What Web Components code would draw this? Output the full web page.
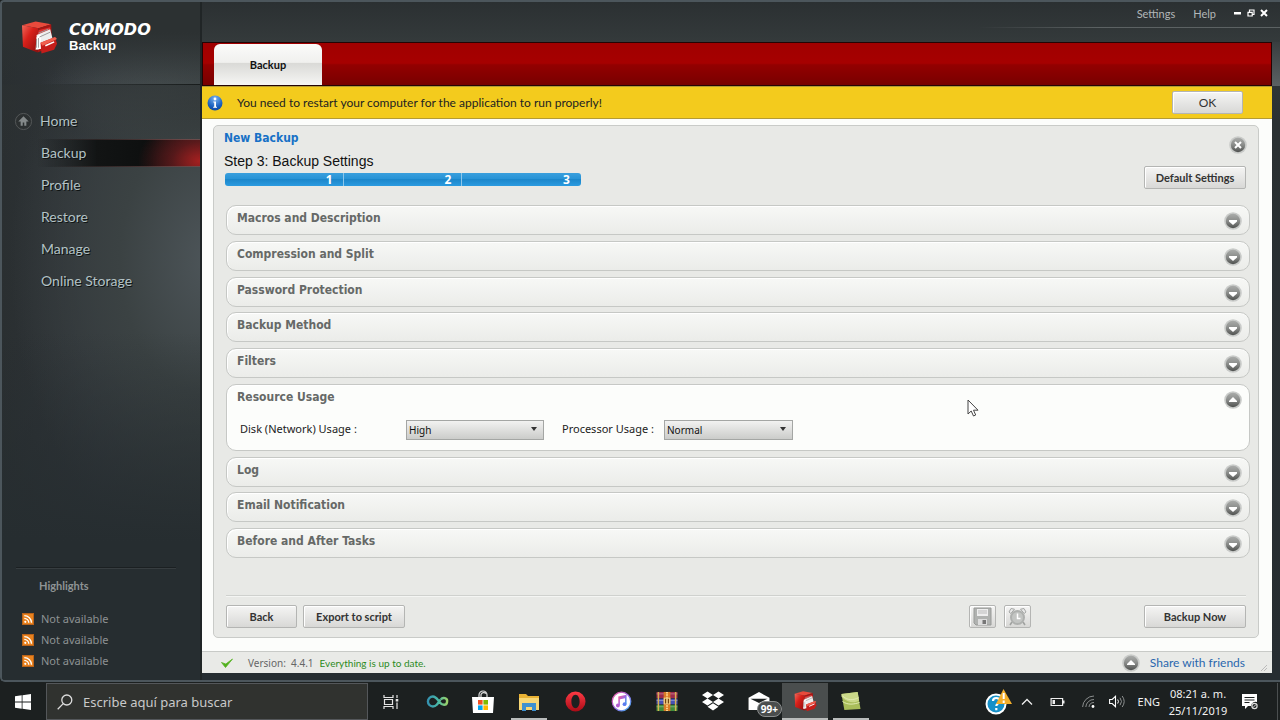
<!DOCTYPE html>
<html lang="en">
<head>
<meta charset="utf-8">
<title>COMODO Backup</title>
<style>
html, body { margin: 0; height: 100%; }
body { background: #1b2020; font-family: Lato, "Noto Sans", sans-serif; }
</style>
</head>
<body>
<backup-desktop></backup-desktop>

<script>
const define = (name, render, after) => {
  customElements.define(name, class extends HTMLElement {
    constructor() {
      super();
      this.attachShadow({ mode: 'open' });
    }
    connectedCallback() {
      if (this.shadowRoot.childNodes.length) return;
      const t = document.createElement('template');
      t.innerHTML = render(this);
      this.shadowRoot.append(t.content.cloneNode(true));
      if (after) after(this);
    }
  });
};

const ICONS = {
  cabinet: `<svg viewBox="0 0 38 34"><defs><linearGradient id="a" x1="0" y1="0" x2="1" y2="1"><stop offset="0" stop-color="#f2685a"/><stop offset=".4" stop-color="#d8201a"/><stop offset="1" stop-color="#8a0d0c"/></linearGradient></defs>
    <path d="M1 4 15 0 31 3 18 7Z" fill="#e84a3c"/><path d="M1 4 18 7 17 32 2 26Z" fill="url(#a)"/><path d="M18 7 31 3 32 26 17 32Z" fill="#a81512"/>
    <path d="M18 9 30 6V11L17 16Z" fill="#d33"/><path d="M16 14 30 8 33 20 17 29Z" fill="#eee"/><path d="M16 16 20 13 21 28 15 29Z" fill="#fff"/><path d="M18 12 28 8M19 16 30 11" stroke="#999" stroke-width="1"/>
    <path d="M20 22 35 16 37 23 34 29 21 33Z" fill="#c41d1a"/><path d="M20 22 35 16 37 18 22 25Z" fill="#f0604f"/><path d="m25 25 9-4" stroke="#fff" stroke-width="1.6"/><path d="M16 18v9M18 17v10" stroke="#777" stroke-width=".7"/></svg>`,
  home: `<svg viewBox="0 0 20 20"><circle cx="10" cy="10" r="8.5" fill="#2c3031" stroke="#55595a"/><path d="M10 4.5 4.500 10H7v4.500h2.200V11h1.600v3.500H13V10h2.500Z" fill="#84898a"/></svg>`,
  info: `<svg viewBox="0 0 16 16"><defs><radialGradient id="a" cx=".5" cy=".2" r=".9"><stop offset="0" stop-color="#7db4ee"/><stop offset=".6" stop-color="#1b62c0"/><stop offset="1" stop-color="#0c3f93"/></radialGradient></defs><circle cx="8" cy="8" r="7.500" fill="url(#a)"/><circle cx="8" cy="4" r="1.400" fill="#fff"/><path d="M6.300 6.500h2.700v5.200h1v1H6.200v-1h1V7.500h-.9Z" fill="#fff"/></svg>`,
  rss: `<svg viewBox="0 0 12 12"><rect width="12" height="12" rx="1" fill="#e8821e"/><rect x=".5" y=".5" width="11" height="11" fill="none" stroke="#b9631a"/><circle cx="3.300" cy="8.800" r="1.100" fill="#fff"/><path d="M2.300 5.300a4.500 4.500 0 0 1 4.500 4.500M2.300 2.600a7.200 7.200 0 0 1 7.200 7.200" fill="none" stroke="#fff" stroke-width="1.300"/></svg>`,
  check: `<svg viewBox="0 0 12 10"><path d="M.5 4.500 4.500 9.500 11.500 1 4.800 6Z" fill="#4faf1c" stroke="#58b424" stroke-width=".8"/></svg>`,
  floppy: `<svg viewBox="0 0 19 19"><path d="M1 1h17v17H3L1 16Z" fill="#b0b2b0" stroke="#989a98"/><path d="M4 2h11v7H4Z" fill="#eee"/><path d="M5 4h9M5 6h9" stroke="#bbb"/><path d="M5 12h9v6H5Z" fill="#ddd"/><path d="M9.500 13h3.500v4H9.500Z" fill="#777"/></svg>`,
  alarm: `<svg viewBox="0 0 19 19"><path d="m4 15-2 3M15 15l2 3" stroke="#a0a2a0" stroke-width="1.600"/><circle cx="9.500" cy="10.500" r="6.500" fill="#c3c5c3" stroke="#aeb0ae" stroke-width="2"/><path d="M1 5 3 1.500 6.500 2.200 2.800 6.500ZM18 5 16 1.500 12.500 2.200 16.200 6.500Z" fill="#e7e7e7" stroke="#a6a8a6"/><path d="M9.500 6.500v5h3" fill="none" stroke="#fff" stroke-width="1.500"/></svg>`,
  min: `<svg viewBox="0 0 8 8"><path d="M0 3h7v2.500H0Z" fill="#fff"/></svg>`,
  restore: `<svg viewBox="0 0 8 8"><path d="M2.500 3V1h4.500v4.500H5.500M1 3.300h4.200v3.700H1Z" fill="none" stroke="#fff" stroke-width="1.200"/></svg>`,
  close: `<svg viewBox="0 0 8 8"><path d="m1 1 6 6M7 1 1 7" stroke="#fff" stroke-width="2"/></svg>`,
  pointer: `<svg viewBox="0 0 12 18"><path d="M1 1v14l3.200-3 2.300 5 2.200-1-2.200-4.800H11Z" fill="#fff" stroke="#444" stroke-width="1"/></svg>`,
  grip: `<svg viewBox="0 0 6 6"><path d="M0 6 6 0M3 6l3-3" stroke="#bbb" fill="none"/></svg>`,
  windows: `<svg viewBox="0 0 16 16"><path d="M0 2.300 6.700 1.300V7.600H0ZM7.500 1.200 16 0V7.600H7.500ZM0 8.400H6.700V14.700L0 13.700ZM7.500 8.400H16V16L7.500 14.800Z" fill="#fff"/></svg>`,
  search: `<svg viewBox="0 0 16 16"><circle cx="9.800" cy="6" r="5" fill="none" stroke="#ddd" stroke-width="1.300"/><path d="M6.200 9.600.7 15.300" stroke="#ddd" stroke-width="1.300"/></svg>`,
  taskview: `<svg viewBox="0 0 16 14"><path d="M1 0v2.500h9V0M1 14v-2.500h9V14M1.500 4.500h8v5h-8Z" fill="none" stroke="#e5e5e5" stroke-width="1.200"/><path d="M14 0v3M14 7.500V14" stroke="#e5e5e5" stroke-width="1.200"/><path d="M12.700 4h2.600v2.500h-2.600Z" fill="#e5e5e5"/></svg>`,
  infinity: `<svg viewBox="0 0 24 14"><defs><linearGradient id="a"><stop offset="0" stop-color="#3492b0"/><stop offset=".55" stop-color="#4ab9a5"/><stop offset="1" stop-color="#9ad169"/></linearGradient></defs><path d="M15 5C12 10 10.500 12.300 7 12.300A5.300 5.300 0 1 1 7 1.700C10.500 1.700 12 5 14.500 8S21.500 12 22.300 7.500 17.500 2 15.500 5" fill="none" stroke="url(#a)" stroke-width="2.600"/></svg>`,
  store: `<svg viewBox="0 0 22 22"><path d="M7 7V4a4 4 0 0 1 8 0V7M9 7V3.500a3 3 0 0 1 5-1" fill="none" stroke="#ddd" stroke-width="1.200"/><path d="M0 6h22l-1 16H1Z" fill="#fff"/><path d="M6 9h4.600v4.600H6Z" fill="#f25022"/><path d="M11.400 9H16v4.600h-4.600Z" fill="#7fba00"/><path d="M6 14.400h4.600V19H6Z" fill="#00a4ef"/><path d="M11.400 14.400H16V19h-4.600Z" fill="#ffb900"/></svg>`,
  folder: `<svg viewBox="0 0 20 18"><path d="M0 1h7l2 2h11v14H0Z" fill="#e9b234"/><path d="M0 5h20v12H0Z" fill="#f8d775"/><path d="M3 10h14v8h-4v-4H7v4H3Z" fill="#3f91cf"/></svg>`,
  opera: `<svg viewBox="0 0 22 22"><defs><linearGradient id="a" x2="0" y2="1"><stop offset="0" stop-color="#ff3b45"/><stop offset="1" stop-color="#a80b16"/></linearGradient></defs><path fill-rule="evenodd" d="M11 .5a10.500 10.500 0 1 0 0 21 10.500 10.500 0 0 0 0-21ZM11 4c2.500 0 4.300 3 4.300 7s-1.800 7-4.300 7-4.300-3-4.300-7S8.500 4 11 4Z" fill="url(#a)"/></svg>`,
  music: `<svg viewBox="0 0 22 22"><defs><linearGradient id="a" x2="1" y2="1"><stop offset="0" stop-color="#f0569a"/><stop offset=".5" stop-color="#9a68e2"/><stop offset="1" stop-color="#35b5f0"/></linearGradient></defs><circle cx="11" cy="11" r="9.700" fill="#fff" stroke="url(#a)" stroke-width="1.300"/><path d="M8.500 15V6.500l7-1.500v8.500M8.500 8l7-1.500" fill="none" stroke="url(#a)" stroke-width="1.700"/><circle cx="7.200" cy="15.200" r="2" fill="#b25bd0"/><circle cx="14.200" cy="13.800" r="2" fill="#5a7cf0"/></svg>`,
  winrar: `<svg viewBox="0 0 24 22"><path d="M1 1h22v6.500H1Z" fill="#9c2b4c"/><path d="M1 8h22v6H1Z" fill="#4451b5"/><path d="M1 14.500h22V21H1Z" fill="#3e8b3c"/><path d="M1 3h22M1 10h22M1 16.500h22" stroke="#ffffff55"/><path d="M3 1v20M21 1v20" stroke="#d7b052" stroke-width="1.500"/><path d="M8.500 1h7v20h-7Z" fill="#d97b25"/><path d="M8.500 7h7v7h-7Z" fill="#f3cf84"/><path d="M10.500 8v5M13.500 8v5" stroke="#73430f" stroke-width="1.300"/><path d="M12 1v6M12 15v6" stroke="#ffd48c" stroke-width="2" stroke-dasharray="1.500 1"/></svg>`,
  dropbox: `<svg viewBox="0 0 22 20"><path d="M5.500 0 11 3.500 5.500 7 0 3.500ZM16.500 0 22 3.500 16.500 7 11 3.500ZM5.500 7 11 10.500 5.500 14 0 10.500ZM16.500 7 22 10.500 16.500 14 11 10.500ZM5.500 15.200 11 11.700l5.500 3.500L11 19Z" fill="#fff"/></svg>`,
  mail: `<svg viewBox="0 0 24 20"><path d="M1 6 12 0 23 6V19H1Z" fill="#fff"/><path d="M3 7h18l-9 4.500Z" fill="#1c2020"/></svg>`,
  green: `<svg viewBox="0 0 20 20"><path d="M0 2 17 0 20 18 3 19Z" fill="#a9bd5a"/><path d="M0 5C7 12 14 12 18.500 9L17 0 0 2Z" fill="#cbd98a"/><path d="M1 10c6 4 12 3 18 1M1 4c5 5 11 5 17 2" stroke="#e3ecb4" fill="none"/></svg>`,
  helpwarn: `<svg viewBox="0 0 27 27"><circle cx="11" cy="16" r="9.500" fill="#1690c8" stroke="#fff" stroke-width="2"/><path d="M8 13c0-4 6.500-4 6.500 0 0 2.500-3.200 2.300-3.200 5M11.300 20v2.300" fill="none" stroke="#fff" stroke-width="2.200"/><path d="M18.500 1 27 16H11Z" fill="#f2ae2b"/><path d="M18.700 5v6M18.700 12.500V15" stroke="#fff" stroke-width="2"/></svg>`,
  chevron: `<svg viewBox="0 0 12 7"><path d="m1 6.500 5-5 5 5" fill="none" stroke="#eee" stroke-width="1.300"/></svg>`,
  battery: `<svg viewBox="0 0 14 10"><path d="M.6 1.500h11.500v7H.6Z" fill="none" stroke="#eee" stroke-width="1.200"/><path d="M12.500 3.500h1.500v3h-1.500ZM2 3h2.500v4H2Z" fill="#eee"/></svg>`,
  wifi: `<svg viewBox="0 0 13 13"><path d="M.6 12A11.500 11.500 0 0 1 12 1M3.800 12A8 8 0 0 1 12 4.500M7 12a5 5 0 0 1 5-4.500" fill="none" stroke="#8a8d8d"/><circle cx="11" cy="11.500" r="1.400" fill="#fff"/></svg>`,
  volume: `<svg viewBox="0 0 16 13"><path d="M.6 4.500h2.600L6.500 1.300v10.400L3.200 8.500H.6Z" fill="none" stroke="#fff" stroke-width="1.100"/><path d="M8.700 4.500q1.500 2 0 4" fill="none" stroke="#fff"/><path d="M11 2.800q3 3.700 0 7.400M13.200 1q4 5.500 0 11" fill="none" stroke="#8d9090"/></svg>`,
  notes: `<svg viewBox="0 0 16 16"><path d="M0 0h15v8a4.500 4.500 0 0 0-6 4H6l-3 3v-3H0Z" fill="#fff"/><path d="M2.500 3.500h10M2.500 6h10M2.500 8.500h5" stroke="#1c2020"/><circle cx="12.500" cy="12" r="2.600" fill="none" stroke="#ddd" stroke-width="1.200"/><path d="m11 13.500 3-3" stroke="#ddd"/></svg>`
};

/* Sized by the --w and --h properties of its user. */
define('ui-icon', el => `<style>
  :host { display: block; flex: none; width: var(--w, 16px); height: var(--h, var(--w, 16px)); }
  svg { display: block; width: 100%; height: 100%; overflow: visible; }
  </style>${ICONS[el.getAttribute('name')]}`);

define('round-button', el => {
  const marks = {
    down: '<path d="M5 8h8v1.500L9 13 5 9.500Z" fill="#fff"/>',
    up: '<path d="M5 10 9 6l4 4v1H5Z" fill="#fff"/>',
    close: '<path d="m6 6 6 6M12 6l-6 6" stroke="#fff" stroke-width="2"/>'
  };
  return `<style>
  :host { display: block; flex: none; width: 18px; height: 18px; }
  button { display: block; width: 18px; height: 18px; padding: 0; border: 0; background: none; }
  svg { display: block; }
  </style><button aria-label="${el.getAttribute('label')}"><svg width="18" height="18" viewBox="0 0 18 18">
  <defs><linearGradient id="g" x2="0" y2="1"><stop offset="0" stop-color="#a9aba9"/><stop offset=".5" stop-color="#8a8c8a"/><stop offset="1" stop-color="#4f514f"/></linearGradient></defs>
  <circle cx="9" cy="9" r="8.800" fill="#c9cbc9"/><circle cx="9" cy="9" r="7.200" fill="url(#g)"/>${marks[el.getAttribute('mark')]}</svg></button>`;
});

define('app-button', el => `<style>
  :host { display: block; flex: none; width: var(--button-width, 102px); }
  button { box-sizing: border-box; display: flex; align-items: center; justify-content: center; width: 100%; height: 23px; padding: 0;
    border: 1px solid #b4b5b3; border-radius: 2px; background: linear-gradient(#f5f5f4, #d8d8d6);
    box-shadow: inset 1px 1px #fff; font: var(--button-font, bold 11px Lato, sans-serif); color: #333; }
  </style><button aria-label="${el.getAttribute('label') || ''}"><slot></slot></button>`,
  el => { if (!el.hasAttribute('label')) el.shadowRoot.querySelector('button').removeAttribute('aria-label'); });

define('nav-item', el => `<style>
  :host { box-sizing: border-box; display: block; height: 32px; padding: 2px 0; }
  a { box-sizing: border-box; display: flex; align-items: center; height: 28px; padding-left: 39px; color: #b3c2c5; text-decoration: none;
    font: 14px/20px Lato, sans-serif; text-shadow: 1px 1px #0f1414; }
  :host([home]) a { padding-left: 12px; gap: 7px; }
  :host([active]) a { border-top: 1px solid; border-bottom: 1px solid; border-image: linear-gradient(90deg, transparent 25%, #6a4c4c) 1;
    background: radial-gradient(ellipse 62px 42px at 100% 80%, #a62020 0, #7c1d1f99 45%, transparent 100%), linear-gradient(90deg, transparent 18%, #121414 48%, #0d0f0f 75%, #2a1517); }
  </style><a href="#"><slot name="icon"></slot><slot></slot></a>`);

define('news-item', () => `<style>
  :host { display: flex; align-items: center; gap: 7px; height: 21px; padding-left: 20px; }
  ui-icon { --w: 12px; }
  a { font: 11px/16px "Noto Sans", sans-serif; color: #8d9293; text-decoration: none; }
  </style><ui-icon name="rss"></ui-icon><a href="#"><slot></slot></a>`);

define('side-bar', () => `<style>
  :host { display: flex; flex-direction: column; width: 200px; flex: none; box-sizing: border-box; border-right: 2px solid #202526; border-radius: 3px 0 0 3px;
    background: linear-gradient(180deg, #2c3132 30px, transparent 82px, #2c313299 83px, transparent 160px, transparent 330px, #262d30 540px),
      radial-gradient(ellipse 200px 300px at 105% 38%, #4d5559, #3b4243 45%, transparent),
      radial-gradient(ellipse 130px 60px at 85% 86px, #50575a, transparent), linear-gradient(90deg, #2a2f31, #30353a 50%, #33393b); }
  header { box-sizing: border-box; display: flex; gap: 11px; height: 83px; padding: 19px 0 0 19px; border-bottom: 1px solid;
    border-image: linear-gradient(90deg, transparent 20%, #181c1c) 1; }
  header ui-icon { --w: 37px; --h: 34px; }
  .brand { font: italic bold 16px/18px "DejaVu Sans", sans-serif; color: #fff; }
  .product { font: bold 13px/14px "Liberation Sans", sans-serif; color: #fff; }
  nav { padding-top: 20px; flex: 1; }
  section { margin-bottom: 9px; padding-top: 7px; }
  hr { margin: 0 24px 0 14px; border: 0; border-top: 1px solid #1b2022; border-bottom: 1px solid #373d40; }
  h2 { margin: 8px 0 13px 37px; font: bold 11px/18px Lato, sans-serif; color: #8f9495; }
  </style>
  <header><ui-icon name="cabinet"></ui-icon><div><div class="brand">COMODO</div><div class="product">Backup</div></div></header>
  <nav>
    <nav-item home><ui-icon slot="icon" name="home" style="--w:19px"></ui-icon>Home</nav-item>
    <nav-item active>Backup</nav-item><nav-item>Profile</nav-item><nav-item>Restore</nav-item><nav-item>Manage</nav-item><nav-item>Online Storage</nav-item>
  </nav>
  <section><hr><h2>Highlights</h2><news-item>Not available</news-item><news-item>Not available</news-item><news-item>Not available</news-item></section>`);

define('title-bar', () => `<style>
  :host { box-sizing: border-box; display: flex; justify-content: flex-end; height: 40px; flex: none; }
  div { box-sizing: border-box; display: flex; align-items: flex-start; justify-content: flex-end; width: 300px; height: 26px; padding: 5px 12px 0 0;
    border-bottom: 1px solid; border-image: linear-gradient(90deg, transparent, #5c6263 40%) 1; }
  a { margin-right: 18px; font: 11px/14px Lato, sans-serif; color: #b2b7b8; text-decoration: none; }
  button { display: block; width: 8px; height: 8px; margin: 2px 5px 0 0; padding: 0; border: 0; background: none; }
  button:last-child { margin-right: 0; }
  ui-icon { --w: 8px; }
  </style>
  <div><a href="#">Settings</a><a href="#">Help</a>
  <button aria-label="Minimize"><ui-icon name="min"></ui-icon></button><button aria-label="Restore"><ui-icon name="restore"></ui-icon></button><button aria-label="Close"><ui-icon name="close"></ui-icon></button></div>`);

define('tab-strip', () => `<style>
  :host { box-sizing: border-box; display: flex; align-items: flex-end; height: 44px; flex: none; padding-left: 11px; border: 1px solid #240404;
    background: linear-gradient(#a00000, #a60000 48%, #930000 52%, #780000); }
  button { width: 108px; height: 41px; padding: 0; border: 0; border-radius: 6px 6px 0 0; background: linear-gradient(#fbfbfa, #f0f0ee 45%, #d9d9d6 46%, #f6f6f4);
    font: bold 11px/14px Lato, sans-serif; color: #111; }
  </style><button role="tab" aria-selected="true"><slot></slot></button>`);

define('notice-bar', () => `<style>
  :host { box-sizing: border-box; display: flex; align-items: center; height: 33px; flex: none; padding: 0 29px 0 5px; background: #f3cb1d; border: solid #b39b35; border-width: 1px 0; }
  ui-icon { --w: 16px; margin-right: 14px; }
  p { margin: 0; flex: 1; font: 12px/18px Lato, sans-serif; color: #222; }
  app-button { --button-width: 71px; --button-font: 12px Lato, sans-serif; }
  </style><ui-icon name="info"></ui-icon><p><slot></slot></p><app-button>OK</app-button>`);

define('step-progress', () => `<style>
  :host { display: block; }
  ol { display: grid; grid-template-columns: 1fr 1fr 1fr; width: 356px; height: 13px; margin: 0; padding: 0; list-style: none; border-radius: 3px;
    background: linear-gradient(#3a9fdd, #2793d6 45%, #1c87cb 50%, #2b9be0); }
  li { box-sizing: border-box; height: 13px; padding-right: 10px; text-align: right; font: bold 12px/13px "Noto Sans", sans-serif; color: #fff; border-right: 1px solid #8cc6ea; }
  li:last-child { border-right-color: transparent; }
  </style><ol><li>1</li><li>2</li><li>3</li></ol>`);

define('settings-section', el => `<style>
  :host { box-sizing: border-box; display: block; min-height: 30px; border: 1px solid #c6c8c5; border-radius: 10px; background: linear-gradient(#f7f8f6, #ebece9); box-shadow: inset 1px 1px #fff; }
  :host([open]) { min-height: 67px; background: #fcfdfb; }
  header { display: flex; justify-content: space-between; align-items: flex-start; padding: 6px 7px 0 10px; }
  h3 { margin: -3px 0 0; font: bold 12px/18px "DejaVu Sans Condensed", "Noto Sans", sans-serif; color: #666967; }
  div { display: flex; padding: 9px 0 0 13px; }
  </style><header><h3>${el.getAttribute('heading')}</h3><round-button mark="${el.hasAttribute('open') ? 'up' : 'down'}" label="${el.getAttribute('heading')}"></round-button></header>
  ${el.hasAttribute('open') ? '<div><slot></slot></div>' : ''}`);

define('labelled-select', el => `<style>
  :host { display: flex; align-items: center; }
  label { width: var(--label-width); font: 11px/16px "Noto Sans", sans-serif; color: #222; }
  span { position: relative; display: block; width: var(--field-width); }
  select { box-sizing: border-box; width: 100%; height: 20px; padding: 0 2px; border: 1px solid #a4a6a4; border-radius: 0; appearance: none;
    background: linear-gradient(#f2f2f1, #cbccca); font: 10px/16px "Noto Sans", sans-serif; color: #111; }
  svg { position: absolute; right: 7px; top: 9px; pointer-events: none; }
  </style><label for="s">${el.getAttribute('label')}</label><span><select id="s">${el.getAttribute('options').split(',').map(o => `<option>${o}</option>`).join('')}</select>
  <svg width="6" height="4"><path d="M0 0h6L3 4Z" fill="#333"/></svg></span>`);

define('backup-panel', () => `<style>
  :host { box-sizing: border-box; display: flex; flex-direction: column; flex: 1; margin: 6px 13px 13px 11px; border: 1px solid #c9cbc8; border-radius: 5px; background: #e8e9e6; }
  .top { display: flex; justify-content: space-between; padding: 3px 12px 0 10px; height: 75px; box-sizing: border-box; }
  h1 { margin: 0; font: bold 12px/18px "DejaVu Sans Condensed", "Noto Sans", sans-serif; color: #1771c6; }
  h2 { margin: 5px 0 2px; font: 14px/19px "Liberation Sans", sans-serif; color: #111; }
  step-progress { margin-left: 1px; }
  .actions { display: flex; flex-direction: column; align-items: flex-end; gap: 12px; padding-top: 7px; }
  .actions round-button { margin-right: -1px; }
  .list { display: flex; flex-direction: column; justify-content: space-between; flex: 1; padding: 4px 8px 37px 12px; }
  .disk { --label-width: 166px; --field-width: 138px; margin-right: 18px; }
  .cpu { --label-width: 102px; --field-width: 129px; }
  footer { display: flex; gap: 6px; margin: 0 12px 9px; padding-top: 9px; border-top: 1px solid #cfd1ce; box-shadow: inset 0 1px #f4f5f3; }
  footer .small { --button-width: 71px; }
  footer .icon { --button-width: 27px; margin-left: 2px; }
  footer .icon ui-icon { --w: 19px; }
  footer .first { margin-left: auto; }
  footer .now { margin-left: 107px; }
  </style>
  <div class="top"><div><h1>New Backup</h1><h2>Step 3: Backup Settings</h2><step-progress></step-progress></div>
    <div class="actions"><round-button mark="close" label="Close"></round-button><app-button>Default Settings</app-button></div></div>
  <div class="list">
    <settings-section heading="Macros and Description"></settings-section>
    <settings-section heading="Compression and Split"></settings-section>
    <settings-section heading="Password Protection"></settings-section>
    <settings-section heading="Backup Method"></settings-section>
    <settings-section heading="Filters"></settings-section>
    <settings-section heading="Resource Usage" open>
      <labelled-select class="disk" label="Disk (Network) Usage :" options="High,Normal,Low"></labelled-select>
      <labelled-select class="cpu" label="Processor Usage :" options="Normal,High,Low"></labelled-select>
    </settings-section>
    <settings-section heading="Log"></settings-section>
    <settings-section heading="Email Notification"></settings-section>
    <settings-section heading="Before and After Tasks"></settings-section>
  </div>
  <footer><app-button class="small">Back</app-button><app-button>Export to script</app-button>
    <app-button class="icon first" label="Save"><ui-icon name="floppy"></ui-icon></app-button><app-button class="icon" label="Schedule"><ui-icon name="alarm"></ui-icon></app-button>
    <app-button class="now">Backup Now</app-button></footer>`);

define('status-bar', () => `<style>
  :host { box-sizing: border-box; display: flex; align-items: center; height: 22px; flex: none; padding: 0 5px 0 19px; border-top: 1px solid #c8cac7; background: #e9eae7; font: 10px/14px "Noto Sans", sans-serif; color: #666; }
  .check { --w: 12px; --h: 10px; margin-right: 15px; }
  b { margin-left: 6px; font: 10px/14px Lato, sans-serif; color: #2c8a1e; }
  a { margin: 0 16px 0 10px; font: 12px/16px Lato, sans-serif; color: #2a67ae; text-decoration: none; }
  round-button { margin-left: auto; }
  .grip { --w: 6px; align-self: flex-end; margin-bottom: 2px; }
  </style><ui-icon class="check" name="check"></ui-icon><span>Version: &nbsp;4.4.1</span><b>Everything is up to date.</b>
  <round-button mark="up" label="Share"></round-button><a href="#">Share with friends</a><ui-icon class="grip" name="grip"></ui-icon>`);

define('app-window', () => `<style>
  :host { box-sizing: border-box; display: flex; flex: 1; border: solid #4c565c; border-width: 2px 0 2px 2px; border-radius: 4px 0 0 5px; background: linear-gradient(#2b3032, #343a3b 40px, #2a3032 120px, #262d31); }
  .main { display: flex; flex-direction: column; flex: 1; padding-bottom: 7px; background: linear-gradient(#383d3f, #5b6163) 100% 40px / 8px 44px no-repeat; }
  .work { display: flex; flex-direction: column; flex: 1; margin-right: 8px; background: #fcfdfb; }
  </style><side-bar></side-bar>
  <div class="main"><title-bar></title-bar><div class="work"><tab-strip>Backup</tab-strip>
    <notice-bar>You need to restart your computer for the application to run properly!</notice-bar>
    <backup-panel></backup-panel><status-bar></status-bar></div></div>`);

define('task-button', el => `<style>
  :host { display: block; position: relative; width: 46px; flex: none; }
  button { display: flex; align-items: center; justify-content: center; box-sizing: border-box; width: 100%; height: 37px; padding: 0; border: 0; background: none; }
  :host([running])::after { content: ""; position: absolute; left: 5px; right: 5px; bottom: 0; height: 2px; background: #b9bcbb; }
  :host([current]) button { background: #4a4e4e; }
  :host([current])::after { left: 0; right: 0; }
  span { position: absolute; right: 0; bottom: 3px; padding: 0 3px; border: 1px solid #8a8d8d; border-radius: 8px; background: #4a4d4d; font: bold 10px/14px "Noto Sans", sans-serif; color: #fff; }
  </style><button aria-label="${el.getAttribute('label')}"><ui-icon name="${el.getAttribute('icon')}"></ui-icon></button>${el.hasAttribute('badge') ? `<span>${el.getAttribute('badge')}</span>` : ''}`);

define('task-bar', () => `<style>
  :host { box-sizing: border-box; display: flex; height: 38px; flex: none; background: #1c2020; font: 11px/16px "Noto Sans", sans-serif; color: #f2f2f2; padding-top: 1px; }
  .search { box-sizing: border-box; display: flex; align-items: center; width: 322px; border: 1px solid #54575a; background: #30322f; padding-left: 10px; gap: 10px; }
  .search ui-icon { --w: 16px; }
  input { flex: 1; min-width: 0; padding: 0; border: 0; background: none; font: 13px/20px "Noto Sans", sans-serif; color: #c9c9c9; }
  input::placeholder { color: #c9c9c9; opacity: 1; }
  .tray { display: flex; align-items: center; margin-left: auto; border-right: 1px solid #4b4f50; margin-right: 2px; }
  .clock { width: 76px; text-align: center; line-height: 17px; }
  </style>
  <task-button icon="windows" label="Start" style="--w:16px"></task-button>
  <div class="search"><ui-icon name="search"></ui-icon><input aria-label="Buscar" placeholder="Escribe aquí para buscar"></div>
  <task-button icon="taskview" label="Task view" style="--w:16px;--h:14px"></task-button>
  <task-button icon="infinity" label="Arduino" style="--w:23px;--h:13px"></task-button>
  <task-button icon="store" label="Store" style="--w:22px"></task-button>
  <task-button running icon="folder" label="Explorer" style="--w:20px;--h:18px"></task-button>
  <task-button icon="opera" label="Opera" style="--w:21px"></task-button>
  <task-button icon="music" label="iTunes" style="--w:21px"></task-button>
  <task-button icon="winrar" label="WinRAR" style="--w:24px;--h:21px"></task-button>
  <task-button icon="dropbox" label="Dropbox" style="--w:22px;--h:21px"></task-button>
  <task-button icon="mail" label="Mail" badge="99+" style="--w:24px;--h:19px"></task-button>
  <task-button running current icon="cabinet" label="Comodo Backup" style="--w:23px;--h:21px"></task-button>
  <task-button running icon="green" label="Camtasia" style="--w:20px;--h:19px"></task-button>
  <div class="tray">
    <ui-icon name="helpwarn" style="--w:27px;margin-right:9px"></ui-icon>
    <ui-icon name="chevron" style="--w:12px;--h:7px;margin-right:17px"></ui-icon>
    <ui-icon name="battery" style="--w:15px;--h:10px;margin-right:17px"></ui-icon>
    <ui-icon name="wifi" style="--w:13px;margin-right:14px"></ui-icon>
    <ui-icon name="volume" style="--w:16px;--h:13px;margin-right:13px"></ui-icon>
    <span>ENG</span>
    <div class="clock">08:21 a. m.<br>25/11/2019</div>
    <ui-icon name="notes" style="--w:16px;margin:0 19px 0 6px"></ui-icon>
  </div>`);

define('backup-desktop', () => `<style>
  :host { position: relative; display: flex; flex-direction: column; min-height: 100vh; background: #1c2020; }
  .pointer { position: absolute; left: 967px; top: 399px; --w: 12px; --h: 18px; }
  </style><app-window></app-window><task-bar></task-bar><ui-icon class="pointer" name="pointer"></ui-icon>`);
</script>
</body>
</html>
